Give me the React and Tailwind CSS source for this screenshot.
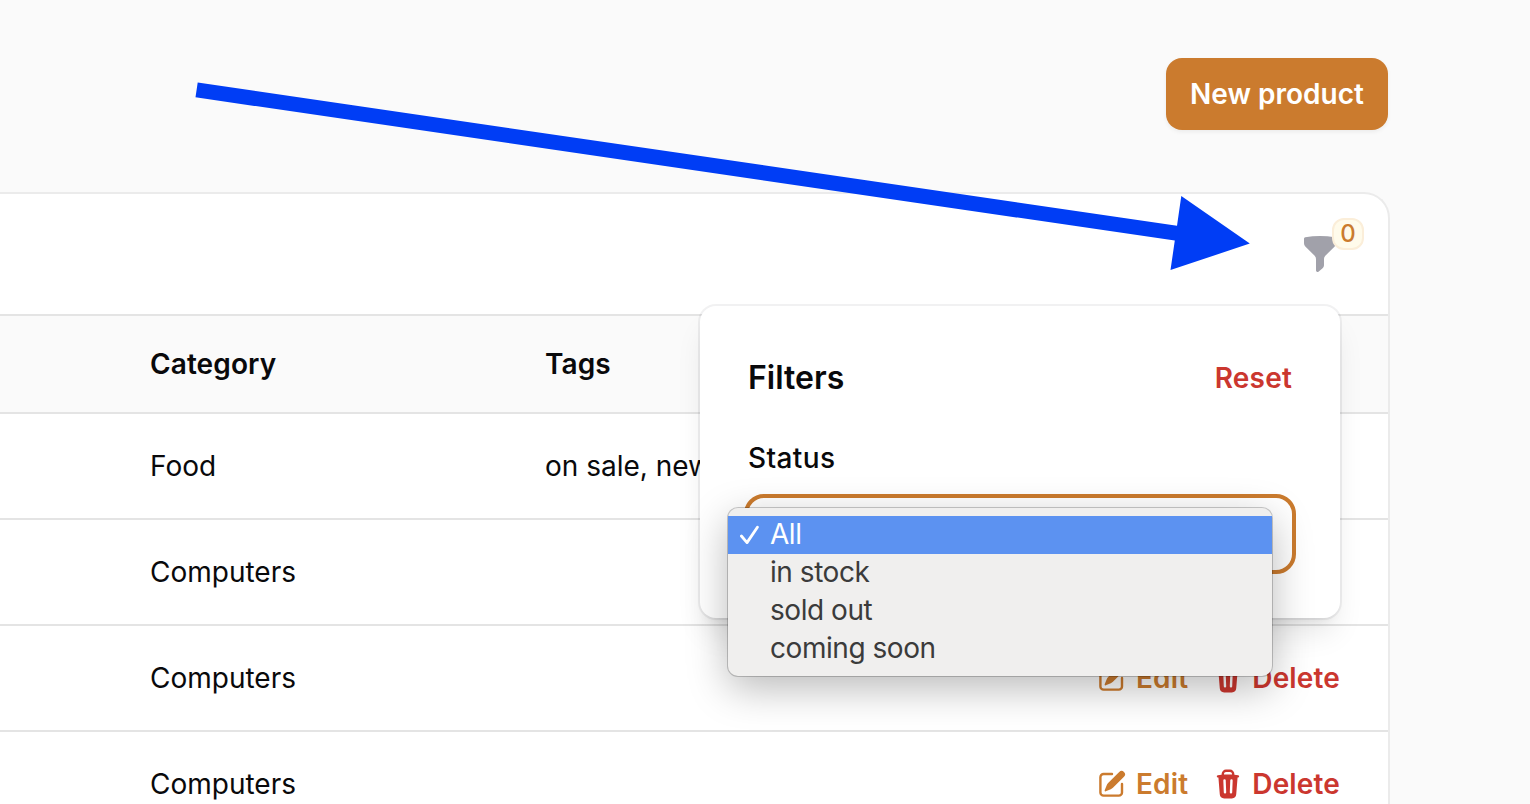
import { HiMiniFunnel, HiMiniPencilSquare, HiMiniTrash } from "react-icons/hi2";

const rows = [
  { category: "Food", tags: "on sale, new" },
  { category: "Computers", tags: "" },
  { category: "Computers", tags: "" },
  { category: "Computers", tags: "" },
];

const options = ["All", "in stock", "sold out", "coming soon"];

function RowActions() {
  return (
    <div className="ml-auto flex gap-6 font-semibold tracking-[0.15px]">
      <button className="flex items-center gap-2 text-[#cb7b2e]">
        <HiMiniPencilSquare className="size-8" />
        Edit
      </button>
      <button className="flex items-center gap-2 text-[#cb372f]">
        <HiMiniTrash className="size-8" />
        Delete
      </button>
    </div>
  );
}

function FilterPanel() {
  return (
    <div className="absolute top-[306px] left-[700px] z-10 h-[312px] w-[640px] rounded-2xl bg-white px-12 pt-12 shadow-[0_0_0_2px_rgba(9,9,11,0.055),0_20px_30px_-6px_rgba(0,0,0,0.1),0_8px_12px_-8px_rgba(0,0,0,0.1)]">
      <div className="flex h-12 items-center justify-between">
        <h4 className="text-[32px] font-semibold">Filters</h4>
        <button className="text-[28px] font-semibold tracking-[0.2px] text-[#cb372f]">Reset</button>
      </div>
      <div className="mt-8 flex h-12 items-center text-[28px] font-[460] tracking-[0.4px]">Status</div>
      <div className="-mx-1 mt-3 h-20 rounded-[20px] border-4 border-[#cb7b2e] bg-white" />
    </div>
  );
}

function OptionMenu() {
  return (
    <ul className="absolute top-[508px] left-[728px] z-20 w-[544px] rounded-[10px] bg-[#f0efee] py-2 text-[28px] tracking-[-0.45px] text-[#3b3b3b] shadow-[0_0_0_1px_rgba(0,0,0,0.2),0_12px_40px_rgba(0,0,0,0.28)]">
      {options.map((name, i) => (
        <li
          key={name}
          className={
            i === 0
              ? "flex h-[38px] items-center bg-[#5c92f1] text-white"
              : "flex h-[38px] items-center"
          }
        >
          <span className="flex w-[42px] shrink-0 justify-center">
            {i === 0 && (
              <svg viewBox="0 0 20 20" className="size-5" fill="none" stroke="currentColor" strokeWidth="2.8" strokeLinecap="round" strokeLinejoin="round">
                <path d="M2.4 11 8 17.6 18.4 2.2" />
              </svg>
            )}
          </span>
          <span className="pb-0.5">{name}</span>
        </li>
      ))}
    </ul>
  );
}

export default function App() {
  return (
    <div className="relative h-[804px] w-[1530px] overflow-hidden bg-[#fafafa] font-['Inter',sans-serif] text-[28px] leading-[40px] text-[#09090b]">
      <header className="flex h-[192px] items-start justify-end pt-[58px] pr-[142px]">
        <button className="flex h-[72px] w-[222px] items-center justify-center rounded-2xl bg-[#cb7b2e] font-semibold text-white shadow-[0_2px_4px_rgba(0,0,0,0.06)]">
          New product
        </button>
      </header>

      <main className="h-[700px] w-[1390px] rounded-tr-[26px] border-t-2 border-r-2 border-[#ebebeb] bg-white">
        <div className="flex h-[120px] items-center justify-end pr-12">
          <button className="relative text-[#a1a1aa]">
            <HiMiniFunnel className="size-10" />
            <span className="absolute -top-4 left-8 flex size-8 items-center justify-center rounded-[12px] border-2 border-[#fbeed9] bg-[#fffbeb] text-[24px] leading-none font-medium text-[#cb7b2e]">
              0
            </span>
          </button>
        </div>
        <div className="flex h-[100px] items-center border-y-2 border-[#e4e4e4] bg-[#fafafa] pl-[150px] font-semibold tracking-[0.1px]">
          <div className="w-[395px]">Category</div>
          <div>Tags</div>
        </div>
        {rows.map((row, i) => (
          <div key={i} className="flex h-[106px] items-center border-b-2 border-[#e4e4e4] pr-12 pl-[150px]">
            <div className="w-[395px]">{row.category}</div>
            <div>{row.tags}</div>
            <RowActions />
          </div>
        ))}
      </main>

      <FilterPanel />
      <OptionMenu />

      <svg className="pointer-events-none absolute inset-0 z-30" width="1530" height="804" viewBox="0 0 1530 804">
        <path fill="#003df5" d="M197.7 82.5 1177 225.8 1181.3 196 1249.8 243.6 1170.5 270 1174.8 240.6 195.5 97.3Z" />
      </svg>
    </div>
  );
}
